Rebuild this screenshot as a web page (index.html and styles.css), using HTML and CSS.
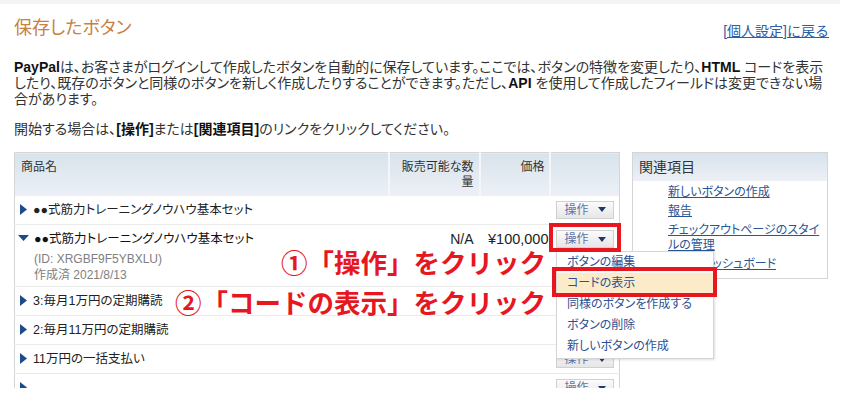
FILE: index.html
```html
<!DOCTYPE html>
<html lang="ja">
<head>
<meta charset="utf-8">
<title>保存したボタン</title>
<link rel="stylesheet" href="styles.css">
</head>
<body>
<div class="page">
  <div class="strip"></div>
  <div class="content">
    <div class="head">
      <h1 class="title">保存したボタン</h1>
      <a class="back" href="#">[個人設定]に戻る</a>
    </div>
    <p class="intro"><b>PayPal</b>は、お客さまがログインして作成したボタンを自動的に保存しています。ここでは、ボタンの特徴を変更したり、<b>HTML</b> コードを表示したり、既存のボタンと同様のボタンを新しく作成したりすることができます。ただし、<b>API</b> を使用して作成したフィールドは変更できない場合があります。</p>
    <p class="start">開始する場合は、<b>[操作]</b>または<b>[関連項目]</b>のリンクをクリックしてください。</p>
    <div class="main">
      <table class="list">
        <colgroup><col class="c-name"><col class="c-qty"><col class="c-price"><col class="c-act"></colgroup>
        <thead>
          <tr><th>商品名</th><th class="num qty-h">販売可能な数量</th><th class="num price-h">価格</th><th></th></tr>
        </thead>
        <tbody>
          <tr>
            <td class="name"><svg class="tri" width="7" height="11" viewBox="0 0 7 11"><polygon points="0,0 7,5.5 0,11"/></svg>●●式筋力トレーニングノウハウ基本セット</td>
            <td></td><td></td>
            <td class="act"><button class="btn">操作<svg width="8" height="5" viewBox="0 0 8 5"><polygon points="0,0 8,0 4,5"/></svg></button></td>
          </tr>
          <tr class="open">
            <td class="name"><svg class="tri down" width="11" height="6" viewBox="0 0 11 6"><polygon points="0,0 11,0 5.5,6"/></svg><span class="pname">●●式筋力トレーニングノウハウ基本セット</span>
              <div class="meta">(ID: XRGBF9F5YBXLU)<br>作成済 2021/8/13</div></td>
            <td class="qty">N/A</td>
            <td class="price">¥100,000</td>
            <td class="act"><button class="btn">操作<svg width="8" height="5" viewBox="0 0 8 5"><polygon points="0,0 8,0 4,5"/></svg></button></td>
          </tr>
          <tr>
            <td class="name"><svg class="tri" width="7" height="11" viewBox="0 0 7 11"><polygon points="0,0 7,5.5 0,11"/></svg>3:毎月1万円の定期購読</td>
            <td></td><td></td>
            <td class="act"><button class="btn">操作<svg width="8" height="5" viewBox="0 0 8 5"><polygon points="0,0 8,0 4,5"/></svg></button></td>
          </tr>
          <tr>
            <td class="name"><svg class="tri" width="7" height="11" viewBox="0 0 7 11"><polygon points="0,0 7,5.5 0,11"/></svg>2:毎月11万円の定期購読</td>
            <td></td><td></td>
            <td class="act"><button class="btn">操作<svg width="8" height="5" viewBox="0 0 8 5"><polygon points="0,0 8,0 4,5"/></svg></button></td>
          </tr>
          <tr>
            <td class="name"><svg class="tri" width="7" height="11" viewBox="0 0 7 11"><polygon points="0,0 7,5.5 0,11"/></svg>11万円の一括支払い</td>
            <td></td><td></td>
            <td class="act"><button class="btn">操作<svg width="8" height="5" viewBox="0 0 8 5"><polygon points="0,0 8,0 4,5"/></svg></button></td>
          </tr>
          <tr>
            <td class="name"><svg class="tri" width="7" height="11" viewBox="0 0 7 11"><polygon points="0,0 7,5.5 0,11"/></svg></td>
            <td></td><td></td>
            <td class="act"><button class="btn">操作<svg width="8" height="5" viewBox="0 0 8 5"><polygon points="0,0 8,0 4,5"/></svg></button></td>
          </tr>
        </tbody>
      </table>
      <aside class="related">
        <h2>関連項目</h2>
        <ul>
          <li><a href="#">新しいボタンの作成</a></li>
          <li><a href="#">報告</a></li>
          <li><a href="#">チェックアウトページのスタイルの管理</a></li>
          <li><a href="#">新しいダッシュボード</a></li>
        </ul>
      </aside>
    </div>
  </div>

  <ul class="menu">
    <li><a href="#">ボタンの編集</a></li>
    <li class="hl"><a href="#">コードの表示</a></li>
    <li><a href="#">同様のボタンを作成する</a></li>
    <li><a href="#">ボタンの削除</a></li>
    <li><a href="#">新しいボタンの作成</a></li>
  </ul>
  <div class="redbox rb1"></div>
  <div class="redbox rb2"></div>
  <div class="note n1">①「操作」をクリック</div>
  <div class="note n2">②「コードの表示」をクリック</div>
</div>
</body>
</html>
```
FILE: styles.css
```css
html, body {
  margin: 0;
  background: #fff;
}
body {
  font-family: "Liberation Sans", "Noto Sans CJK JP", sans-serif;
  color: #333;
}
.page {
  position: relative;
  width: 855px;
  height: 400px;
  overflow: hidden;
}
.strip {
  width: 840px;
  height: 4px;
  background: #f4f4f4;
}
.content {
  height: 384px;
  overflow: hidden;
  padding: 0 26px 0 14px;
}
.head {
  display: flex;
  justify-content: space-between;
  align-items: flex-end;
  padding-top: 13px;
}
.title {
  margin: 0;
  font-size: 18px;
  line-height: 22px;
  font-weight: normal;
  color: #c8813f;
  font-feature-settings: "palt";
}
.back {
  font-size: 14px;
  line-height: 16px;
  margin-bottom: 0;
  color: #2b5ea8;
}
.intro {
  margin: 20px 0 0;
  font-size: 14px;
  line-height: 16px;
  color: #333;
  font-feature-settings: "palt";
}
.intro b, .start b {
  color: #111;
}
.start {
  margin: 14px 0 0;
  font-size: 14px;
  line-height: 16px;
  font-feature-settings: "palt";
}
.main {
  display: flex;
  align-items: flex-start;
  gap: 12px;
  margin-top: 15px;
}
.list {
  width: 606px;
  border-collapse: collapse;
  table-layout: fixed;
  border: 1px solid #d5d5d5;
  font-feature-settings: "palt";
}
.c-name { width: 374px; }
.c-qty { width: 91px; }
.c-price { width: 70px; }
.c-act { width: 70px; }
.list thead tr { height: 43px; }
.list th {
  vertical-align: top;
  text-align: left;
  font-size: 12px;
  line-height: 15px;
  font-weight: normal;
  color: #333;
  padding: 7px 5px 0 6px;
  background: linear-gradient(#d8e3eb, #edf0f6);
}
.list th + th { border-left: 2px solid #f4f6f9; }
.list th.num { text-align: right; }
.list th.qty-h { padding-right: 5px; }
.list th.price-h { padding-right: 4px; }
.list tbody tr { height: 29px; }
.list td {
  padding: 0;
  font-size: 12.5px;
  line-height: 16px;
  color: #222;
  vertical-align: middle;
  border-bottom: 1px solid #ebebeb;
  white-space: nowrap;
}
.list td.name { padding-left: 5px; }
.tri {
  fill: #1c4b8c;
  margin-right: 6px;
  vertical-align: -1px;
}
.tri.down {
  margin-left: -2px;
  margin-right: 5px;
  vertical-align: 2px;
}
.list tr.open td {
  vertical-align: top;
  padding-top: 6px;
  padding-bottom: 3px;
}
.list tr.open td.act { padding-top: 5px; }
.pname { color: #111; }
.meta {
  margin-top: 4px;
  padding-left: 14px;
  font-size: 12px;
  line-height: 16px;
  color: #808080;
}
.list td.qty { text-align: right; padding-right: 6px; font-size: 14px; }
.list td.price { text-align: right; padding-right: 1px; font-size: 14.5px; }
.list td.act { padding-left: 6px; }
.btn {
  display: flex;
  align-items: center;
  justify-content: space-between;
  box-sizing: border-box;
  width: 58px;
  height: 18px;
  margin: 0;
  padding: 0 7px 0 8px;
  border: 1px solid #d0d0d0;
  background: linear-gradient(#fbfbfb, #e6e6e6);
  font-family: "Liberation Sans", "Noto Sans CJK JP", sans-serif;
  font-size: 12px;
  line-height: 16px;
  color: #5a75ad;
}
.btn svg { fill: #1d3a6b; }
.related {
  box-sizing: border-box;
  width: 196px;
  border: 1px solid #d5d5d5;
  font-feature-settings: "palt";
}
.related h2 {
  margin: 0;
  height: 28px;
  padding-left: 6px;
  font-size: 14px;
  line-height: 28px;
  font-weight: normal;
  color: #333;
  background: linear-gradient(#d8e3eb, #edf0f6);
}
.related ul {
  list-style: none;
  margin: 0;
  padding: 4px 2px 6px 35px;
}
.related li {
  font-size: 12px;
  line-height: 15px;
  margin-bottom: 4px;
}
.related li:last-child { margin-bottom: 0; }
.related a { color: #2a5593; }
.menu {
  position: absolute;
  left: 556px;
  top: 251px;
  width: 158px;
  box-sizing: border-box;
  margin: 0;
  padding: 0 0 1px;
  list-style: none;
  background: #fff;
  border: 1px solid #d5d5d5;
  box-shadow: 1px 1px 2px rgba(0, 0, 0, 0.12);
  font-feature-settings: "palt";
}
.menu li {
  height: 21px;
  line-height: 21px;
  padding-left: 10px;
  font-size: 12px;
}
.menu li.hl { background: #fcebc8; }
.menu a { color: #2d5090; text-decoration: none; }
.redbox {
  position: absolute;
  box-sizing: border-box;
  border: 4px solid #e8161e;
}
.rb1 { left: 549px; top: 223px; width: 72px; height: 29px; }
.rb2 { left: 552px; top: 267px; width: 165px; height: 30px; }
.note {
  position: absolute;
  right: 309px;
  font-family: "Noto Sans CJK JP", sans-serif;
  font-size: 26.5px;
  line-height: 30px;
  font-weight: 700;
  color: #e6171f;
  white-space: nowrap;
  text-shadow: 0 0 2px #fff, 0 0 2px #fff, 0 0 2px #fff;
}
.n1 { top: 247px; }
.n2 { top: 287px; }
```
